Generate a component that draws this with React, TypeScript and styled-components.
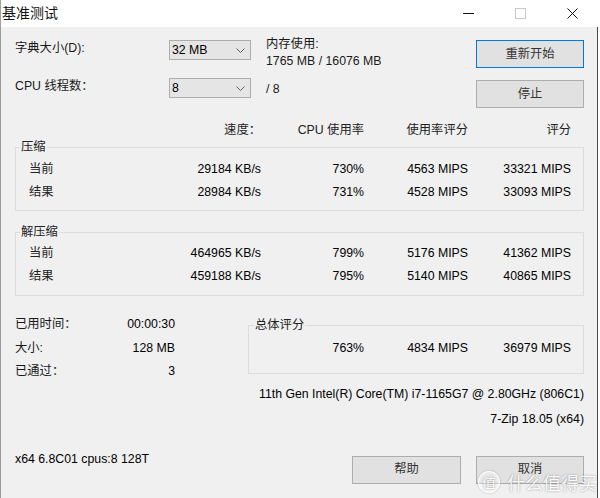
import styled, { createGlobalStyle } from 'styled-components';

const FONT = `"Liberation Sans", "Noto Sans CJK SC", sans-serif`;

const GlobalStyle = createGlobalStyle`
  html, body {
    margin: 0;
    padding: 0;
    background: #fff;
  }
  body {
    font-family: ${FONT};
  }
`;

const Window = styled.div`
  position: relative;
  width: 600px;
  height: 498px;
  overflow: hidden;
  background: #fff;
  font-family: ${FONT};
  font-size: 12.3px;
  line-height: 17px;
  color: #000;
  display: flex;
  flex-direction: column;
`;

const TitleBar = styled.div`
  flex: none;
  height: 27px;
  display: flex;
  align-items: center;
  border-left: 1px solid #a0a0a0;
`;

const Title = styled.div`
  flex: 1;
  padding-left: 1px;
  font-size: 14px;
  line-height: 27px;
  color: #111;
`;

const Controls = styled.div`
  display: flex;
  margin-right: 2px;
`;

const CtrlButton = styled.div`
  width: 52px;
  height: 27px;
  display: flex;
  align-items: center;
  justify-content: center;
`;

const Body = styled.div`
  flex: 1;
  width: 598px;
  box-sizing: border-box;
  background: #f0f0f0;
  border-left: 1px solid #9a9a9a;
  border-right: 1px solid #4a4a4a;
  padding: 13px 13px 0 14px;
  display: flex;
  flex-direction: column;
`;

const TopGrid = styled.div`
  display: grid;
  grid-template-columns: 154px 82px 1fr 108px;
  grid-template-rows: 38px 30px;
`;

const Label = styled.div<{ $top?: number }>`
  align-self: start;
  margin-top: ${p => p.$top ?? 0}px;
  color: #1a1a1a;
  white-space: nowrap;
`;

const Select = styled.div`
  align-self: start;
  height: 20px;
  box-sizing: border-box;
  border: 1px solid #adadad;
  background: #e5e5e5;
  display: flex;
  align-items: center;
  justify-content: space-between;
  padding: 0 5px 0 2px;
`;

const Info = styled.div<{ $top: number }>`
  align-self: start;
  margin-top: ${p => p.$top}px;
  padding-left: 15px;
  color: #1a1a1a;
  white-space: nowrap;
`;

const Button = styled.div<{ $primary?: boolean; $top?: number; $w?: number }>`
  align-self: start;
  margin-top: ${p => p.$top ?? 0}px;
  width: ${p => p.$w ?? 108}px;
  height: 28px;
  box-sizing: border-box;
  border: 1px solid ${p => (p.$primary ? '#0078d7' : '#adadad')};
  background: #e1e1e1;
  display: flex;
  align-items: center;
  justify-content: center;
  color: #333;
`;

const COLS = '74px 172px 103px 104px 103px';
const GROUP_COLS = '73px 172px 103px 104px 103px';

const HeaderRow = styled.div`
  margin-top: 13.5px;
  display: grid;
  grid-template-columns: ${COLS};
  color: #222;
  & > * {
    text-align: right;
    white-space: nowrap;
  }
`;

const Group = styled.fieldset<{ $top: number; $pt: number; $pb: number }>`
  margin: ${p => p.$top}px 0 0;
  padding: ${p => p.$pt}px 0 ${p => p.$pb}px;
  border: 1px solid #dcdcdc;
  min-width: 0;
`;

const Legend = styled.legend<{ $left?: number }>`
  margin-left: ${p => p.$left ?? 4}px;
  padding: 0 1px;
  line-height: 17px;
  color: #222;
`;

const DataRow = styled.div<{ $cols: string }>`
  display: grid;
  grid-template-columns: ${p => p.$cols};
  line-height: 23px;
  & > * {
    text-align: right;
    white-space: nowrap;
  }
  & > :first-child {
    text-align: left;
    padding-left: 13px;
    color: #222;
  }
`;

const Bottom = styled.div`
  margin-top: 17.5px;
  display: flex;
  align-items: flex-start;
`;

const Stats = styled.div`
  width: 160px;
  display: grid;
  grid-template-columns: 1fr auto;
  line-height: 23.5px;
  & > :nth-child(odd) {
    color: #1a1a1a;
  }
  & > :nth-child(even) {
    text-align: right;
  }
`;

const Overall = styled(Group)`
  width: 336px;
  margin-left: 73px;
  box-sizing: border-box;
`;

const OverallRow = styled.div`
  display: grid;
  grid-template-columns: 115px 104px 103px;
  line-height: 23px;
  & > * {
    text-align: right;
    white-space: nowrap;
  }
`;

const RightLine = styled.div<{ $top: number }>`
  margin-top: ${p => p.$top}px;
  text-align: right;
  white-space: nowrap;
`;

const Footer = styled.div`
  margin-top: 23px;
  display: flex;
  align-items: flex-start;
  gap: 15px;
`;

const FooterText = styled.div`
  flex: 1;
`;

const Watermark = styled.div`
  position: absolute;
  right: 3px;
  bottom: 5px;
  display: flex;
  align-items: center;
  gap: 7px;
  color: rgba(255, 255, 255, 0.95);
  font-family: "Noto Sans CJK SC", sans-serif;
  font-size: 18px;
  line-height: 22px;
  text-shadow: 0 0 2px rgba(0, 0, 0, 0.4);
  pointer-events: none;
`;

const Badge = styled.div`
  width: 20px;
  height: 20px;
  border-radius: 50%;
  border: 1.5px solid rgba(255, 255, 255, 0.95);
  background: rgba(255, 255, 255, 0.3);
  display: flex;
  align-items: center;
  justify-content: center;
  font-size: 14px;
  box-shadow: 0 0 2px rgba(0, 0, 0, 0.3);
`;

const Chevron = () => (
  <svg width="9" height="5" viewBox="0 0 9 5">
    <polyline points="0.5,0.5 4.5,4.5 8.5,0.5" fill="none" stroke="#606060" strokeWidth="1" />
  </svg>
);

const rows = {
  compress: [
    ['当前', '29184 KB/s', '730%', '4563 MIPS', '33321 MIPS'],
    ['结果', '28984 KB/s', '731%', '4528 MIPS', '33093 MIPS'],
  ],
  decompress: [
    ['当前', '464965 KB/s', '799%', '5176 MIPS', '41362 MIPS'],
    ['结果', '459188 KB/s', '795%', '5140 MIPS', '40865 MIPS'],
  ],
};

const Rows = ({ data }: { data: string[][] }) => (
  <>
    {data.map(r => (
      <DataRow $cols={GROUP_COLS} key={r[0]}>
        {r.map((c, i) => (
          <span key={i}>{c}</span>
        ))}
      </DataRow>
    ))}
  </>
);

export default function App() {
  return (
    <Window>
      <GlobalStyle />
      <TitleBar>
        <Title>基准测试</Title>
        <Controls>
          <CtrlButton>
            <svg width="11" height="1" viewBox="0 0 11 1">
              <rect width="11" height="1" fill="#111" />
            </svg>
          </CtrlButton>
          <CtrlButton>
            <svg width="11" height="11" viewBox="0 0 11 11">
              <rect x="0.5" y="0.5" width="10" height="10" fill="none" stroke="#c8c8c8" />
            </svg>
          </CtrlButton>
          <CtrlButton>
            <svg width="11" height="11" viewBox="0 0 11 11">
              <path d="M0.5 0.5 L10.5 10.5 M10.5 0.5 L0.5 10.5" stroke="#111" strokeWidth="1" />
            </svg>
          </CtrlButton>
        </Controls>
      </TitleBar>
      <Body>
        <TopGrid>
          <Label>字典大小(D):</Label>
          <Select>
            <span>32 MB</span>
            <Chevron />
          </Select>
          <Info $top={-4}>
            内存使用:
            <br />
            1765 MB / 16076 MB
          </Info>
          <Button $primary>重新开始</Button>

          <Label>CPU 线程数：</Label>
          <Select>
            <span>8</span>
            <Chevron />
          </Select>
          <Info $top={3}>/ 8</Info>
          <Button $top={2}>停止</Button>
        </TopGrid>

        <HeaderRow>
          <span />
          <span>速度：</span>
          <span>CPU 使用率</span>
          <span>使用率评分</span>
          <span>评分</span>
        </HeaderRow>

        <Group $top={0} $pt={2} $pb={6}>
          <Legend>压缩</Legend>
          <Rows data={rows.compress} />
        </Group>

        <Group $top={13} $pt={1} $pb={7}>
          <Legend>解压缩</Legend>
          <Rows data={rows.decompress} />
        </Group>

        <Bottom>
          <Stats>
            <span>已用时间：</span>
            <span>00:00:30</span>
            <span>大小:</span>
            <span>128 MB</span>
            <span>已通过：</span>
            <span>3</span>
          </Stats>
          <Overall $top={3.5} $pt={3.5} $pb={13}>
            <Legend $left={5}>总体评分</Legend>
            <OverallRow>
              <span>763%</span>
              <span>4834 MIPS</span>
              <span>36979 MIPS</span>
            </OverallRow>
          </Overall>
        </Bottom>

        <RightLine $top={2.5}>11th Gen Intel(R) Core(TM) i7-1165G7 @ 2.80GHz (806C1)</RightLine>
        <RightLine $top={8}>7-Zip 18.05 (x64)</RightLine>

        <Footer>
          <FooterText>x64 6.8C01 cpus:8 128T</FooterText>
          <Button $top={4.5} $w={109}>帮助</Button>
          <Button $top={4.5}>取消</Button>
        </Footer>
      </Body>
      <Watermark>
        <Badge>值</Badge>
        <span>什么值得买</span>
      </Watermark>
    </Window>
  );
}
